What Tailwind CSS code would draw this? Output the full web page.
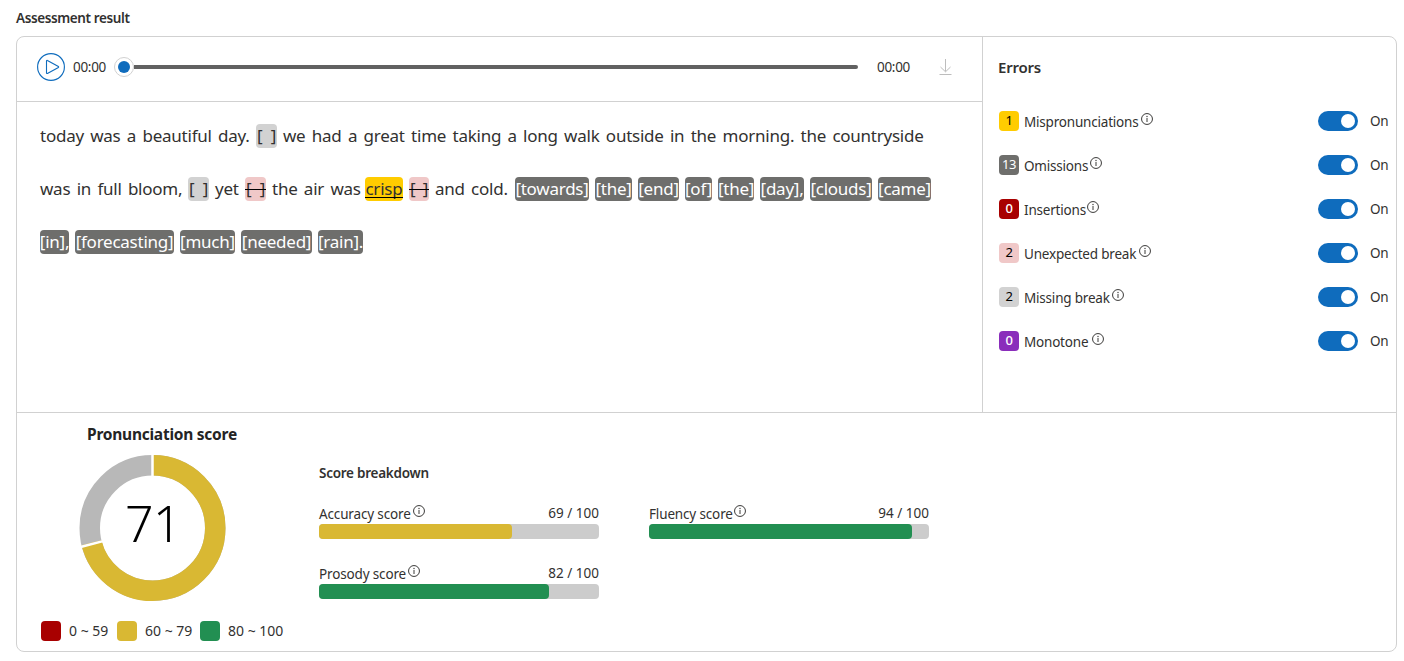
<!DOCTYPE html>
<html lang="en">
<head>
<meta charset="utf-8">
<title>Assessment result</title>
<script src="https://cdn.jsdelivr.net/npm/@tailwindcss/browser@4"></script>
</head>
<body class="h-[661px] overflow-hidden bg-white px-4 font-['Noto_Sans',sans-serif] text-[13.5px] text-[#323130]">
<svg class="hidden">
  <symbol id="info" viewBox="0 0 12 12"><circle cx="6" cy="6" r="5.45" fill="none" stroke="#3b3a39" stroke-width="1"/><path d="M6 5v4" stroke="#3b3a39" stroke-width="1"/><circle cx="6" cy="3.5" r=".7" fill="#3b3a39"/></symbol>
</svg>
<h1 class="h-9 text-[13.5px] leading-9 font-semibold tracking-[-0.39px]">Assessment result</h1>
<main class="flex h-[616px] w-[1381px] flex-col rounded-lg border border-[#d1d1d1]">
  <div class="flex h-[376px] border-b border-[#d1d1d1]">
    <section class="w-[966px] border-r border-[#d1d1d1]">
      <div class="flex h-[65px] items-center border-b border-[#d1d1d1] pb-1 pl-5">
        <svg class="size-7 shrink-0" viewBox="0 0 28 28" fill="none" stroke="#0f6cbd"><circle cx="14" cy="14" r="13.4" stroke-width="1.15"/><path d="M9.5 8.1v11.8a.6.6 0 0 0 .9.5l11-5.9a.6.6 0 0 0 0-1L10.400 7.500a.6.6 0 0 0-.9.6Z" stroke-width="1.1"/></svg>
        <span class="ml-2 w-[34px] tracking-[-0.3px] whitespace-nowrap">00:00</span>
        <div class="ml-[7px] flex w-[744px] items-center">
          <span class="flex size-5 items-center justify-center rounded-full border border-[#d1d1d1]"><span class="size-3 rounded-full bg-[#0f6cbd]"></span></span>
          <span class="h-1 flex-1 rounded-r-sm bg-[#616161]"></span>
        </div>
        <span class="ml-[19px] w-[33px] tracking-[-0.3px] whitespace-nowrap">00:00</span>
        <svg class="ml-[27px] h-4 w-4" viewBox="0 0 16 16" fill="none" stroke="#bdbdbd" stroke-width="1"><path d="M8.500 0v12.500M3.500 8l5 4.800 5-4.800M2.500 15.500h12"/></svg>
      </div>
      <div class="pt-[7px] pl-[23px] text-[17px] leading-[24px] tracking-[-0.25px] whitespace-nowrap [word-spacing:2.2px]">
        <div class="flex h-[53px] items-center">
          <span class="w-[216px]">today was a beautiful day.</span>
          <span class="mr-1.5 flex w-[21px] justify-between rounded bg-[#d2d2d2] px-px"><span>[</span><span>]</span></span>
          <span>we had a great time taking a long walk outside in the morning. the countryside</span>
        </div>
        <div class="flex h-[53px] items-center">
          <span class="w-[148px]">was in full bloom,</span>
          <span class="mr-1.5 flex w-[21px] justify-between rounded bg-[#d2d2d2] px-px"><span>[</span><span>]</span></span>
          <span class="w-[30px]">yet</span>
          <span class="relative mr-1.5 flex w-[21px] justify-between rounded bg-[#f0c8c8] px-px"><span>[</span><span>]</span><span class="absolute inset-x-0 top-3 h-px bg-black"></span></span>
          <span class="w-[93px]">the air was</span>
          <span class="relative mr-1.5 w-[38px] rounded bg-[#ffcc00] text-center tracking-[-0.2px]">crisp<span class="absolute inset-x-0 top-[20px] h-px bg-black"></span></span>
          <span class="relative mr-1.5 flex w-[20px] justify-between rounded bg-[#f0c8c8] px-px"><span>[</span><span>]</span><span class="absolute inset-x-0 top-3 h-px bg-black"></span></span>
          <span class="w-[80px]">and cold.</span>
          <span class="flex gap-1.5 text-white *:flex *:justify-center *:rounded *:bg-[#6e6e6c]">
            <span class="w-[74px]">[towards]</span><span class="w-[37px]">[the]</span><span class="w-[41px]">[end]</span><span class="w-[27px]">[of]</span><span class="w-[36px]">[the]</span><span class="w-[44px]">[day],</span><span class="w-[62px]">[clouds]</span><span class="w-[53px]">[came]</span>
          </span>
        </div>
        <div class="flex h-[53px] items-center gap-1.5 text-white *:flex *:justify-center *:rounded *:bg-[#6e6e6c]">
          <span class="w-[29px]">[in],</span><span class="w-[99px]">[forecasting]</span><span class="w-[55px]">[much]</span><span class="w-[71px]">[needed]</span><span class="w-[45px]">[rain].</span>
        </div>
      </div>
    </section>
    <aside class="flex-1 pl-4">
      <h2 class="-ml-px h-[62px] text-[15px] leading-[60px] font-semibold tracking-[-0.2px]">Errors</h2>
      <div id="errors" class="*:flex *:h-11 *:items-center"></div>
    </aside>
  </div>
  <div class="flex flex-1">
    <section class="w-[302px] pl-6">
      <h2 class="w-[242px] pt-[11px] text-center text-[15.5px] leading-5 font-bold tracking-[-0.25px] text-[#242424]">Pronunciation score</h2>
      <svg class="mt-[10px] ml-[38px] size-[148px]" viewBox="-74 -74 148 148">
        <g fill="none" stroke-width="20.500" transform="translate(-.5 0) rotate(-90)"><circle r="62.750" stroke="#b8b8b8"/><circle r="62.750" pathLength="100" stroke="#d9b833" stroke-dasharray="71.200 28.800"/></g>
        <path d="M-.5-50v-24M-49 12.900l-26 6.700" stroke="#fff" stroke-width="2.500"/>
        <text x="0" y="14" text-anchor="middle" font-size="50" font-weight="350" letter-spacing="-.5" fill="#000">71</text>
      </svg>
      <div class="mt-[19px] flex items-center text-[14px] leading-5 whitespace-nowrap">
        <i class="mr-2 size-5 rounded bg-[#a80000]"></i><span class="w-[48px]">0 ~ 59</span>
        <i class="mr-2 size-5 rounded bg-[#d9b833]"></i><span class="w-[55px]">60 ~ 79</span>
        <i class="mr-2 size-5 rounded bg-[#228f52]"></i><span>80 ~ 100</span>
      </div>
    </section>
    <section class="pt-[50px]">
      <h3 class="leading-5 font-semibold tracking-[-0.25px]">Score breakdown</h3>
      <div id="scores" class="mt-[20px] grid grid-cols-[280px_280px] gap-x-[50px] gap-y-[24px]"></div>
    </section>
  </div>
</main>
<script>
const info = '<svg class="mb-[5px] ml-0.5 size-3 shrink-0"><use href="#info"/></svg>';
const errors = [
  [1, 'Mispronunciations', 'bg-[#ffcc00] text-black', 'w-[115px]'],
  [13, 'Omissions', 'bg-[#6e6e6c] text-white', 'w-[64px]'],
  [0, 'Insertions', 'bg-[#a80000] text-white font-medium', 'w-[61px]'],
  [2, 'Unexpected break', 'bg-[#f0c8c8] text-black', 'w-[113px]'],
  [2, 'Missing break', 'bg-[#d2d2d2] text-black', 'w-[86px]'],
  [0, 'Monotone', 'bg-[#8a2dbb] text-white font-medium', 'w-[66px]'],
];
document.getElementById('errors').innerHTML = errors.map(([n, label, badge, w]) =>
  `<div><span class="mr-[5px] flex size-5 items-center justify-center rounded text-[13px] tracking-[-0.4px] ${badge}">${n}</span><span class="${w} pt-[3px] tracking-[-0.2px] whitespace-nowrap">${label}</span>${info}
  <span class="ml-auto flex h-5 w-10 items-center justify-end rounded-full bg-[#0f6cbd] pr-[3px]"><span class="size-3.5 rounded-full bg-white"></span></span><span class="ml-3 w-[26px] tracking-[-0.3px]">On</span></div>`).join('');
const scores = [
  ['Accuracy score', 69, 'bg-[#d9b833]', 'w-[92px]'],
  ['Fluency score', 94, 'bg-[#228f52]', 'w-[83px]'],
  ['Prosody score', 82, 'bg-[#228f52]', 'w-[87px]'],
];
document.getElementById('scores').innerHTML = scores.map(([label, n, color, w]) =>
  `<div><div class="flex h-[21px] items-center leading-5 whitespace-nowrap"><span class="${w} pt-px tracking-[-0.15px]">${label}</span>${info}<span class="ml-auto pb-px">${n} / 100</span></div>
  <div class="h-[15px] rounded bg-[#cccccc]"><div class="h-full rounded ${color}" style="width:${n}%"></div></div></div>`).join('');
</script>
</body>
</html>
